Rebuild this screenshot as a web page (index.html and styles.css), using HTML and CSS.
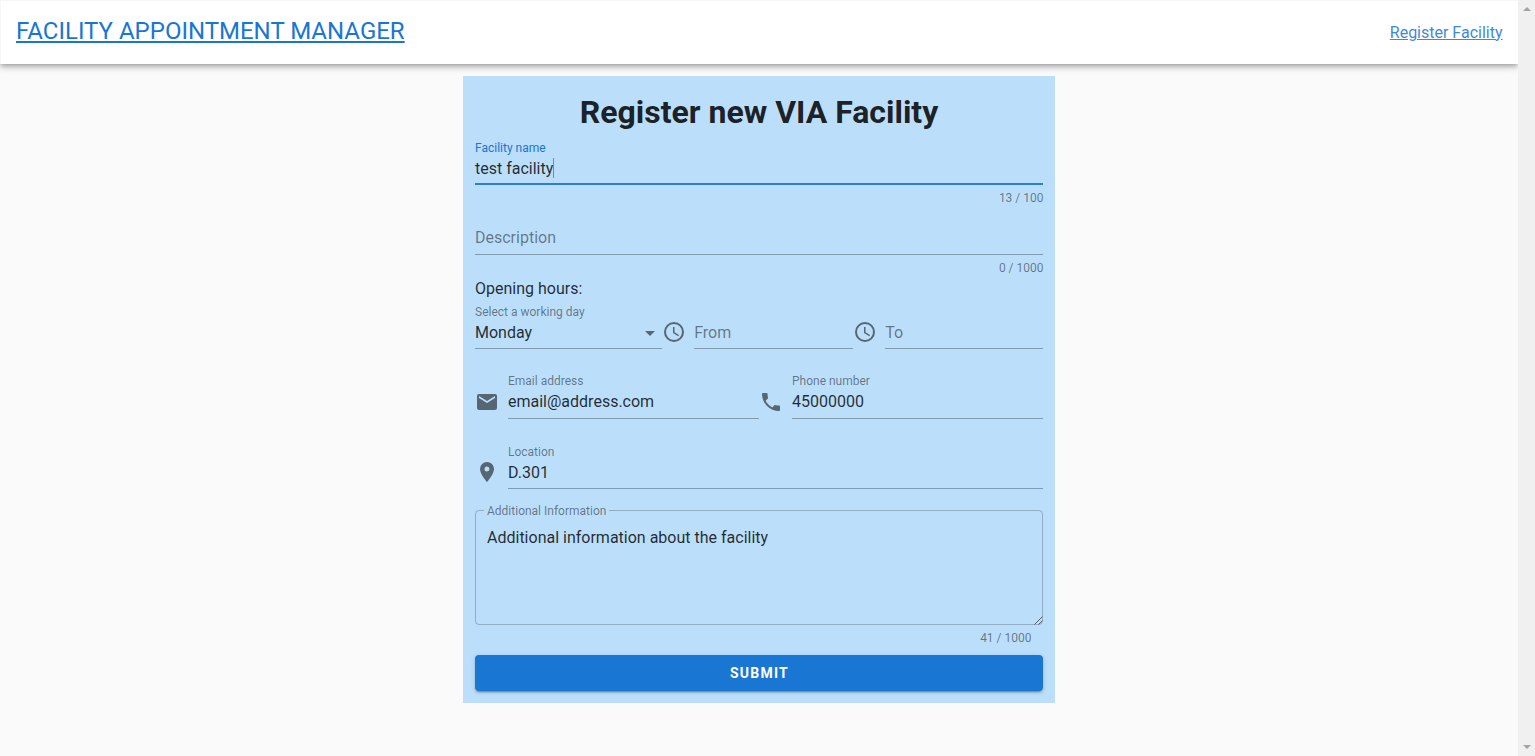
FILE: index.html
```html
<!DOCTYPE html>
<html lang="en">
<head>
<meta charset="utf-8">
<title>Facility Appointment Manager</title>
<link rel="stylesheet" href="styles.css">
</head>
<body>
<div class="page">
  <header class="app-bar">
    <a class="brand">FACILITY APPOINTMENT MANAGER</a>
    <a class="nav-link">Register Facility</a>
  </header>
  <main class="form">
    <h1 class="form-title">Register new VIA Facility</h1>
    <div class="field focused">
      <div class="control">
        <div class="label">Facility name</div>
        <div class="value"><span>test facility</span><i class="caret"></i></div>
      </div>
      <div class="counter">13 / 100</div>
    </div>
    <div class="field snug">
      <div class="control">
        <div class="label"></div>
        <div class="value placeholder">Description</div>
      </div>
      <div class="counter">0 / 1000</div>
    </div>
    <div class="subheading">Opening hours:</div>
    <div class="row">
      <div class="field day">
        <div class="control">
          <div class="label">Select a working day</div>
          <div class="value">Monday<svg class="arrow" viewBox="0 0 24 24"><path d="M7 10l5 5 5-5z"/></svg></div>
        </div>
      </div>
      <div class="field from with-icon">
        <svg class="icon" viewBox="0 0 24 24"><path d="M12 20a8 8 0 1 0 0-16 8 8 0 0 0 0 16m0-18a10 10 0 1 1 0 20 10 10 0 0 1 0-20m.5 5v5.25l4.5 2.67-.75 1.23L11 13V7h1.5z"/></svg>
        <div class="control">
          <div class="label"></div>
          <div class="value placeholder">From</div>
        </div>
      </div>
      <div class="field to with-icon">
        <svg class="icon" viewBox="0 0 24 24"><path d="M12 20a8 8 0 1 0 0-16 8 8 0 0 0 0 16m0-18a10 10 0 1 1 0 20 10 10 0 0 1 0-20m.5 5v5.25l4.5 2.67-.75 1.23L11 13V7h1.5z"/></svg>
        <div class="control">
          <div class="label"></div>
          <div class="value placeholder">To</div>
        </div>
      </div>
    </div>
    <div class="row">
      <div class="field half with-icon snug">
        <svg class="icon" viewBox="0 0 24 24"><path d="M20 8l-8 5-8-5V6l8 5 8-5m0-2H4c-1.110 0-2 .89-2 2v12a2 2 0 0 0 2 2h16a2 2 0 0 0 2-2V6a2 2 0 0 0-2-2z"/></svg>
        <div class="control">
          <div class="label">Email address</div>
          <div class="value">email@address.com</div>
        </div>
      </div>
      <div class="field half with-icon snug">
        <svg class="icon" viewBox="0 0 24 24"><path d="M6.620 10.790c1.440 2.830 3.760 5.140 6.590 6.590l2.200-2.200c.27-.27.67-.36 1.020-.24 1.120.37 2.330.57 3.570.57.55 0 1 .45 1 1V20c0 .55-.45 1-1 1A17 17 0 0 1 3 4c0-.55.45-1 1-1h3.500c.55 0 1 .45 1 1 0 1.250.2 2.450.57 3.570.11.35.03.74-.25 1.020l-2.200 2.200z"/></svg>
        <div class="control">
          <div class="label">Phone number</div>
          <div class="value">45000000</div>
        </div>
      </div>
    </div>
    <div class="field with-icon">
      <svg class="icon" viewBox="0 0 24 24"><path d="M12 11.500a2.500 2.500 0 1 1 0-5 2.500 2.500 0 0 1 0 5M12 2a7 7 0 0 0-7 7c0 5.250 7 13 7 13s7-7.750 7-13a7 7 0 0 0-7-7z"/></svg>
      <div class="control">
        <div class="label">Location</div>
        <div class="value">D.301</div>
      </div>
    </div>
    <fieldset class="notes">
      <legend class="notes-label">Additional Information</legend>
      <div class="notes-text">Additional information about the facility</div>
      <svg class="grip" viewBox="0 0 9 9"><path d="M.5 8.500l8-8M4.500 8.500l4-4"/></svg>
    </fieldset>
    <div class="counter notes-counter">41 / 1000</div>
    <button class="submit">SUBMIT</button>
  </main>
</div>
<div class="scrollbar">
  <svg class="scroll-arrow" viewBox="0 0 8 4"><path d="M0 4l4-4 4 4z"/></svg>
  <svg class="scroll-arrow" viewBox="0 0 8 4"><path d="M0 0l4 4 4-4z"/></svg>
</div>
</body>
</html>
```
FILE: styles.css
```css
* { box-sizing: border-box; }
body {
  margin: 0;
  height: 756px;
  display: flex;
  overflow: hidden;
  background: #fafafa;
  color: rgba(0, 0, 0, .82);
  font: 400 16px/24px Roboto, sans-serif;
}
.page { flex: 1; overflow: hidden; }
.scrollbar {
  width: 17px;
  background: #f0f0f0;
  display: flex;
  flex-direction: column;
  justify-content: space-between;
  align-items: center;
  padding: 7px 0;
}
.scroll-arrow { width: 8px; height: 4px; fill: #a3a3a3; }
.app-bar {
  height: 64px;
  padding: 0 15.500px 0 15px;
  display: flex;
  align-items: center;
  justify-content: space-between;
  background: #fff;
  border-top: 1px solid #f7f7f7;
  border-left: 1px solid #f7f7f7;
  box-shadow: 0 2px 4px -1px rgba(0, 0, 0, .2), 0 4px 5px rgba(0, 0, 0, .14), 0 1px 10px rgba(0, 0, 0, .12);
}
.brand { margin-bottom: 3px; font-size: 24px; line-height: 32px; color: #1976d2; text-decoration: underline; }
.nav-link { color: #1976d2; opacity: .85; text-decoration: underline; }
.form {
  width: 592px;
  height: 627px;
  margin: 12px auto 0;
  padding: 12px;
  background: #bbdefb;
}
.form-title { margin: 0; font-size: 32px; line-height: 48px; font-weight: 700; text-align: center; color: rgba(0, 0, 0, .87); }
.field { height: 70px; padding-top: 4px; }
.control { flex: 1; border-bottom: 1px solid rgba(0, 0, 0, .3); height: 45px; }
.label { height: 17px; font-size: 12px; line-height: 16px; color: rgba(0, 0, 0, .48); }
.snug .label { height: 16px; line-height: 14px; }
.value { height: 24px; display: flex; align-items: center; }
.placeholder { color: rgba(0, 0, 0, .48); }
.focused .control { border-bottom: 2px solid #2a7fd5; }
.focused .label { color: #1976d2; }
.caret { width: 1px; height: 20px; margin: -2px 0 0 -.5px; background: #4a97e0; }
.counter { margin: 7px -.5px 0 0; font-size: 12px; line-height: 12px; color: rgba(0, 0, 0, .48); text-align: right; }
.subheading { height: 24px; line-height: 26px; }
.row { display: flex; }
.day { width: 186.500px; }
.from { width: 191px; }
.to { width: 190.500px; }
.half { width: 284px; }
.with-icon { display: flex; }
.icon { width: 24px; height: 24px; margin: 16px 9px 0 0; fill: rgba(0, 0, 0, .54); }
.from .icon, .to .icon { margin-right: 8.700px; }
.arrow { width: 24px; height: 24px; margin-left: auto; fill: rgba(0, 0, 0, .54); }
.notes {
  position: relative;
  height: 122px;
  margin: -7px 0 0;
  padding: 0 8px;
  border: 1px solid rgba(0, 0, 0, .22);
  border-radius: 4px;
}
.notes-label { height: 14px; padding: 0 3px; font-size: 12px; line-height: 16px; color: rgba(0, 0, 0, .48); }
.notes-text { padding: 9px 3px; }
.grip { position: absolute; right: -1px; bottom: -1px; width: 9px; height: 9px; stroke: #50606c; stroke-width: 1; }
.notes-counter { margin: 7px 11.500px 0; }
.submit {
  display: block;
  width: 100%;
  height: 36px;
  margin-top: 11px;
  padding: 0 0 0 1px;
  border: 0;
  border-radius: 4px;
  background: #1976d2;
  color: #fff;
  font: 700 14px Roboto, sans-serif;
  letter-spacing: 1.250px;
  box-shadow: 0 3px 1px -2px rgba(0, 0, 0, .2), 0 2px 2px rgba(0, 0, 0, .14), 0 1px 5px rgba(0, 0, 0, .12);
}
```
